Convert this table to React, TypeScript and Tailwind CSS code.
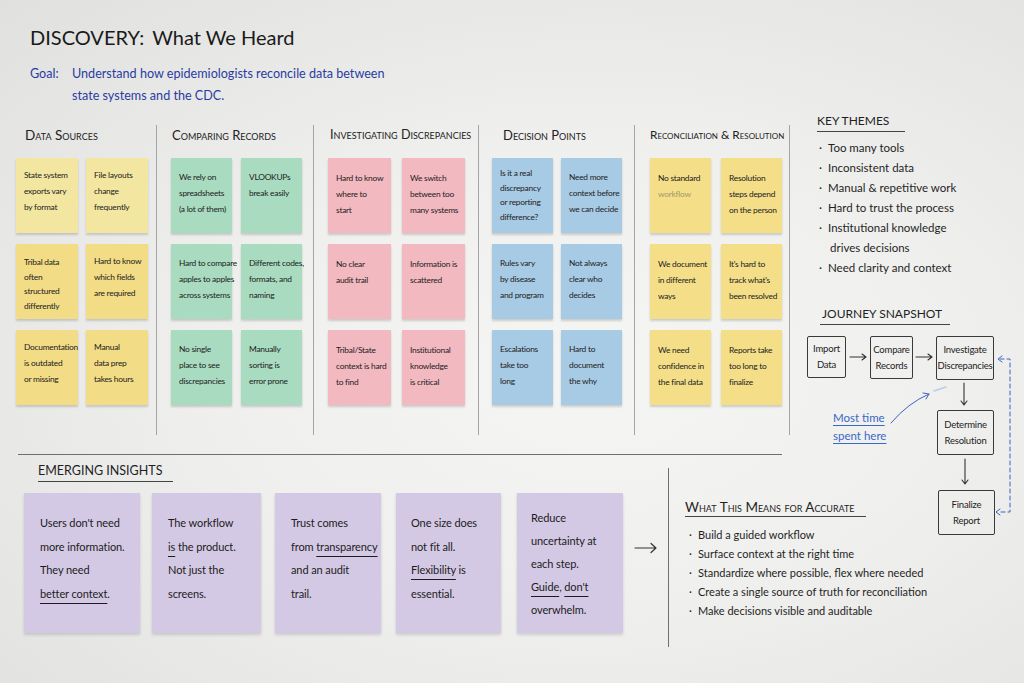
type Note = { lines: string[]; light?: boolean };

type Column = {
  title: string;
  width: string;
  headPad: string;
  headSize: string;
  notePad: string;
  gap: string;
  noteW: string;
  color: string;
  lightColor?: string;
  pt: string;
  pt4: string;
  notes: Note[];
};

const columns: Column[] = [
  {
    title: "Data Sources",
    width: "w-[141px]",
    headPad: "pl-[9px]",
    headSize: "text-[13.5px]",
    notePad: "pl-0",
    gap: "gap-x-[8px]",
    noteW: "w-[62px]",
    color: "bg-[#f2dc85]",
    lightColor: "bg-[#f3e6a0]",
    pt: "pt-[9px]",
    pt4: "pt-[11px]",
    notes: [
      { lines: ["State system", "exports vary", "by format"], light: true },
      { lines: ["File layouts", "change", "frequently"], light: true },
      { lines: ["Tribal data", "often", "structured", "differently"] },
      { lines: ["Hard to know", "which fields", "are required"] },
      { lines: ["Documentation", "is outdated", "or missing"] },
      { lines: ["Manual", "data prep", "takes hours"] },
    ],
  },
  {
    title: "Comparing Records",
    width: "w-[157px]",
    headPad: "pl-[15px]",
    headSize: "text-[13px]",
    notePad: "pl-[14px]",
    gap: "gap-x-[9px]",
    noteW: "w-[61px]",
    color: "bg-[#a8dbbf]",
    pt: "pt-[11px]",
    pt4: "pt-[8px]",
    notes: [
      { lines: ["We rely on", "spreadsheets", "(a lot of them)"] },
      { lines: ["VLOOKUPs", "break easily"] },
      { lines: ["Hard to compare", "apples to apples", "across systems"] },
      { lines: ["Different codes,", "formats, and", "naming"] },
      { lines: ["No single", "place to see", "discrepancies"] },
      { lines: ["Manually", "sorting is", "error prone"] },
    ],
  },
  {
    title: "Investigating Discrepancies",
    width: "w-[165px]",
    headPad: "pl-[16px]",
    headSize: "text-[12.6px]",
    notePad: "pl-[14px]",
    gap: "gap-x-[11px]",
    noteW: "w-[63px]",
    color: "bg-[#f3b9c1]",
    pt: "pt-[12px]",
    pt4: "pt-[8px]",
    notes: [
      { lines: ["Hard to know", "where to", "start"] },
      { lines: ["We switch", "between too", "many systems"] },
      { lines: ["No clear", "audit trail"] },
      { lines: ["Information is", "scattered"] },
      { lines: ["Tribal/State", "context is hard", "to find"] },
      { lines: ["Institutional", "knowledge", "is critical"] },
    ],
  },
  {
    title: "Decision Points",
    width: "w-[156px]",
    headPad: "pl-[24px]",
    headSize: "text-[13px]",
    notePad: "pl-[13px]",
    gap: "gap-x-[8px]",
    noteW: "w-[61px]",
    color: "bg-[#a7cae5]",
    pt: "pt-[11px]",
    pt4: "pt-[8px]",
    notes: [
      { lines: ["Is it a real", "discrepancy", "or reporting", "difference?"] },
      { lines: ["Need more", "context before", "we can decide"] },
      { lines: ["Rules vary", "by disease", "and program"] },
      { lines: ["Not always", "clear who", "decides"] },
      { lines: ["Escalations", "take too", "long"] },
      { lines: ["Hard to", "document", "the why"] },
    ],
  },
  {
    title: "Reconciliation & Resolution",
    width: "w-[155px]",
    headPad: "pl-[15px]",
    headSize: "text-[11.8px]",
    notePad: "pl-[15px]",
    gap: "gap-x-[10px]",
    noteW: "w-[61px]",
    color: "bg-[#f4de88]",
    pt: "pt-[12px]",
    pt4: "pt-[8px]",
    notes: [
      { lines: ["No standard", "~workflow"] },
      { lines: ["Resolution", "steps depend", "on the person"] },
      { lines: ["We document", "in different", "ways"] },
      { lines: ["It's hard to", "track what's", "been resolved"] },
      { lines: ["We need", "confidence in", "the final data"] },
      { lines: ["Reports take", "too long to", "finalize"] },
    ],
  },
];

const themes = [
  ["Too many tools"],
  ["Inconsistent data"],
  ["Manual & repetitive work"],
  ["Hard to trust the process"],
  ["Institutional knowledge", "drives decisions"],
  ["Need clarity and context"],
];

const meansFor = [
  "Build a guided workflow",
  "Surface context at the right time",
  "Standardize where possible, flex where needed",
  "Create a single source of truth for reconciliation",
  "Make decisions visible and auditable",
];

function StickyNote({ note, col }: { note: Note; col: Column }) {
  const four = note.lines.length > 3;
  return (
    <div
      className={`${col.noteW} h-[75px] ${note.light && col.lightColor ? col.lightColor : col.color} ${four ? col.pt4 : col.pt} pl-[8px] shadow-[0_2px_2px_rgba(0,0,0,0.16)] text-[8.4px] tracking-[-0.25px] whitespace-nowrap text-[#222] ${four ? "leading-[14.5px]" : "leading-[16px]"}`}
    >
      {note.lines.map((l, i) =>
        l.startsWith("~") ? (
          <div key={i} className="text-[#a39a6a]">
            {l.slice(1)}
          </div>
        ) : (
          <div key={i}>{l}</div>
        )
      )}
    </div>
  );
}

function FlowBox({ lines, className }: { lines: string[]; className: string }) {
  return (
    <div
      className={`absolute flex flex-col items-center justify-center border border-[#3a3a3a] rounded-[2px] text-[9.5px] leading-[16px] tracking-[-0.2px] text-[#222] ${className}`}
    >
      {lines.map((l) => (
        <span key={l}>{l}</span>
      ))}
    </div>
  );
}

function JourneyDiagram() {
  return (
    <div className="relative -ml-[17px] mt-[3px] w-[224px] h-[0px]">
      <FlowBox lines={["Import", "Data"]} className="left-[7px] top-[8px] w-[39px] h-[42px]" />
      <FlowBox lines={["Compare", "Records"]} className="left-[70px] top-[8px] w-[43px] h-[43px]" />
      <FlowBox lines={["Investigate", "Discrepancies"]} className="left-[136px] top-[8px] w-[58px] h-[44px]" />
      <FlowBox lines={["Determine", "Resolution"]} className="left-[137px] top-[82px] w-[57px] h-[45px]" />
      <FlowBox lines={["Finalize", "Report"]} className="left-[138px] top-[162px] w-[57px] h-[45px]" />

      <svg
        className="absolute left-0 top-0 w-[224px] h-[220px] pointer-events-none"
        viewBox="0 0 224 220"
        fill="none"
      >
        <g stroke="#333" strokeWidth="1.1" strokeLinecap="round" strokeLinejoin="round">
          <path d="M50 29 H66 M62 26 L66 29 L62 32" />
          <path d="M116 29 H132 M128 26 L132 29 L128 32" />
          <path d="M164 55 V77 M161 73 L164 77 L167 73" />
          <path d="M165 131 V156 M162 152 L165 156 L168 152" />
        </g>
        <g stroke="#3d63c4" strokeWidth="1" strokeLinecap="round" strokeLinejoin="round">
          <path d="M200 31 H210 V184 H198" strokeDasharray="4 3" />
          <path d="M202 28 L198 31 L202 34" />
          <path d="M200 181 L196 184 L200 187" />
          <path d="M91 95 Q108 75 129 66" />
          <path d="M123 65 L129 66 L126 71" />
        </g>
        <path d="M134 63 L146 59" stroke="#9cc0ea" strokeWidth="1.5" strokeLinecap="round" opacity="0.7" />
      </svg>

      <div className="absolute left-[33px] top-[81px] text-[11.5px] leading-[18px] text-[#3a68c6]">
        <div className="underline decoration-1 underline-offset-[3px]">Most time</div>
        <div className="underline decoration-1 underline-offset-[3px]">spent here</div>
      </div>
    </div>
  );
}

function U({ children }: { children: React.ReactNode }) {
  return <span className="underline decoration-1 underline-offset-[5px]">{children}</span>;
}

const insightNote =
  "h-[140px] bg-[#d4c9e4] shadow-[0_2px_3px_rgba(0,0,0,0.14)] whitespace-nowrap";

export default function App() {
  return (
    <div className="relative w-[1024px] h-[683px] overflow-hidden bg-[radial-gradient(ellipse_at_58%_55%,#f5f5f3_0%,#efefed_45%,#e0e0df_100%)] text-[#1f1f1f] [font-family:Lato,'Liberation_Sans',sans-serif]">
      {/* Title + goal */}
      <header className="pl-[30px] pt-[24px]">
        <h1 className="text-[20px] leading-[26px] text-[#1a1a1a]">
          DISCOVERY:<span className="ml-[8px]">What We Heard</span>
        </h1>
        <div className="mt-[13px] flex text-[12.6px] leading-[22px] text-[#2a3ca3]">
          <span className="w-[42px] shrink-0">Goal:</span>
          <p>
            Understand how epidemiologists reconcile data between
            <br />
            state systems and the CDC.
          </p>
        </div>
      </header>

      {/* Columns + right panel */}
      <div className="mt-[4px] flex h-[324px]">
        <div className="ml-[16px] mt-[14px] flex">
          {columns.map((col) => (
            <div key={col.title} className={`${col.width} h-[310px] border-r border-[#a5a5a5]`}>
              <div className={`${col.headPad} ${col.headSize} h-[20px] leading-[20px] whitespace-nowrap text-[#222] [font-variant:small-caps]`}>
                {col.title}
              </div>
              <div className={`mt-[13px] ${col.notePad} grid grid-cols-[auto_auto] justify-start gap-y-[11px] ${col.gap}`}>
                {col.notes.map((n, i) => (
                  <StickyNote key={i} note={n} col={col} />
                ))}
              </div>
            </div>
          ))}
        </div>

        <div className="flex flex-col items-start pl-[27px]">
          <div className="pr-[16px] border-b border-[#444] text-[12px] leading-[20px] uppercase">Key Themes</div>
          <ul className="mt-[6px] ml-[2px] text-[11.5px] leading-[20px]">
            {themes.map((t) => (
              <li key={t[0]} className="flex">
                <span className="w-[9px] shrink-0">·</span>
                <span>
                  {t.map((l, i) => (
                    <div key={l} className={i > 0 ? "pl-[2px]" : ""}>
                      {l}
                    </div>
                  ))}
                </span>
              </li>
            ))}
          </ul>
          <div className="mt-[26px] ml-[3px] pl-[2px] pr-[8px] border-b border-[#444] text-[12px] leading-[20px] uppercase">
            Journey Snapshot
          </div>
          <JourneyDiagram />
        </div>
      </div>

      {/* Divider */}
      <div className="ml-[18px] mt-[19px] h-px w-[764px] bg-[#6f6f6f]" />

      {/* Bottom row */}
      <div className="mt-[8px] flex items-start">
        <div className="pl-[24px]">
          <div className="ml-[14px] w-fit pr-[11px] pb-[2px] border-b border-[#444] text-[12.5px] leading-[16px] uppercase">
            Emerging Insights
          </div>
          <div className="mt-[11px] flex text-[11px] leading-[23.5px] tracking-[-0.1px] text-[#1c1c1c]">
            <div className={`w-[116px] pl-[16px] pt-[18px] ${insightNote}`}>
              <div>Users don't need</div>
              <div>more information.</div>
              <div>They need</div>
              <div>
                <U>better context</U>.
              </div>
            </div>
            <div className={`ml-[12px] w-[109px] pl-[16px] pt-[18px] ${insightNote}`}>
              <div>The workflow</div>
              <div>
                <U>is</U> the product.
              </div>
              <div>Not just the</div>
              <div>screens.</div>
            </div>
            <div className={`ml-[14px] w-[106px] pl-[16px] pt-[18px] ${insightNote}`}>
              <div>Trust comes</div>
              <div>
                from <U>transparency</U>
              </div>
              <div>and an audit</div>
              <div>trail.</div>
            </div>
            <div className={`ml-[15px] w-[105px] pl-[15px] pt-[18px] ${insightNote}`}>
              <div>One size does</div>
              <div>not fit all.</div>
              <div>
                <U>Flexibility</U> is
              </div>
              <div>essential.</div>
            </div>
            <div className={`ml-[16px] w-[106px] pl-[14px] pt-[13px] leading-[23px] ${insightNote}`}>
              <div>Reduce</div>
              <div>uncertainty at</div>
              <div>each step.</div>
              <div>
                <U>Guide</U>, <U>don't</U>
              </div>
              <div>overwhelm.</div>
            </div>
          </div>
        </div>

        <svg className="ml-[11px] mt-[79px] w-[24px] h-[12px] shrink-0" viewBox="0 0 24 12" fill="none">
          <path d="M1 6 H22 M17 1.5 L22 6 L17 10.5" stroke="#333" strokeWidth="1.2" strokeLinecap="round" strokeLinejoin="round" />
        </svg>

        <div className="ml-[10px] mt-[5px] h-[179px] w-px shrink-0 bg-[#6f6f6f]" />

        <div className="ml-[16px] mt-[36px]">
          <div className="w-fit pr-[11px] pb-[1px] border-b border-[#444] text-[13.5px] leading-[16px] whitespace-nowrap [font-variant:small-caps]">
            What This Means for Accurate
          </div>
          <ul className="mt-[8px] ml-[4px] text-[11px] leading-[19px] whitespace-nowrap">
            {meansFor.map((m) => (
              <li key={m} className="flex">
                <span className="w-[9px] shrink-0">·</span>
                <span>{m}</span>
              </li>
            ))}
          </ul>
        </div>
      </div>
    </div>
  );
}
